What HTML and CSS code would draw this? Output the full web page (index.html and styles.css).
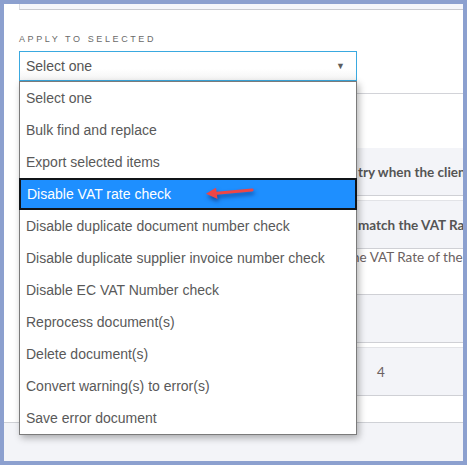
FILE: index.html
```html
<!DOCTYPE html>
<html>
<head>
<meta charset="utf-8">
<link rel="stylesheet" href="styles.css">
</head>
<body>
<div class="frame">
  <div class="main">
    <div class="topbox"></div>
    <div class="field">
      <div class="label">APPLY TO SELECTED</div>
      <div class="select">
        <span>Select one</span>
        <span class="caret">&#9660;</span>
      </div>
      <ul class="menu">
        <li>Select one</li>
        <li>Bulk find and replace</li>
        <li>Export selected items</li>
        <li class="active">Disable VAT rate check
          <svg class="pointer" width="56" height="22" viewBox="0 0 56 22">
            <line x1="12" y1="10.5" x2="50" y2="7" stroke="#ee4646" stroke-width="3.2" stroke-linecap="round"/>
            <polygon points="4,10.8 14,4.8 15.5,16" fill="#ee4646"/>
          </svg>
        </li>
        <li>Disable duplicate document number check</li>
        <li>Disable duplicate supplier invoice number check</li>
        <li>Disable EC VAT Number check</li>
        <li>Reprocess document(s)</li>
        <li>Delete document(s)</li>
        <li>Convert warning(s) to error(s)</li>
        <li>Save error document</li>
      </ul>
    </div>
    <div class="table">
      <div class="row blank"></div>
      <div class="row shade head"><div class="c1"></div><div class="c2">try when the client is in another country</div></div>
      <div class="gap"></div>
      <div class="row shade head"><div class="c1"></div><div class="c2">match the VAT Rate of the VAT code</div></div>
      <div class="row plain top"><div class="c1"></div><div class="c2 cut">he VAT Rate of the VAT code</div></div>
      <div class="row shade"><div class="c1"></div><div class="c2"></div></div>
      <div class="gap"></div>
      <div class="row shade"><div class="c1"></div><div class="c2 num">4</div></div>
      <div class="row tail"></div>
    </div>
  </div>
  <div class="footer"></div>
</div>
</body>
</html>
```

FILE: styles.css
```css
html, body {
  margin: 0;
  padding: 0;
}
body {
  font-family: "Liberation Sans", Arial, sans-serif;
}
.frame {
  width: 467px;
  height: 465px;
  box-sizing: border-box;
  border: 4px solid #8ca0cf;
  display: flex;
  flex-direction: column;
  background: #fff;
  overflow: hidden;
}
.main {
  height: 419px;
  box-sizing: border-box;
  border-bottom: 1px solid #cfd1d6;
  padding-left: 15px;
  background: #fff;
}
.footer {
  flex: 1;
  background: #f3f4f8;
}
.topbox {
  height: 6px;
  box-sizing: border-box;
  background: #f5f6fa;
  border-left: 1px solid #dcdde2;
  border-bottom: 1px solid #cacbd0;
}
.field {
  position: relative;
  width: 338px;
  padding-top: 24px;
}
.label {
  font-size: 9px;
  line-height: 10px;
  letter-spacing: 2.6px;
  color: #6a6a6a;
  margin-bottom: 7px;
}
.select {
  height: 30px;
  box-sizing: border-box;
  border: 1px solid #3aa9e0;
  display: flex;
  align-items: center;
  justify-content: space-between;
  padding: 0 11px 0 6px;
  font-size: 14px;
  color: #555;
  background: linear-gradient(#fff 60%, #f4f4f4);
}
.caret {
  font-size: 9px;
  color: #5d5d5d;
}
.menu {
  position: absolute;
  left: 0;
  top: 71px;
  width: 338px;
  box-sizing: border-box;
  margin: 0;
  padding: 0;
  list-style: none;
  background: #fff;
  border: 1px solid #7b7b7b;
  box-shadow: 2px 3px 7px rgba(0, 0, 0, 0.3);
  z-index: 2;
}
.menu li {
  height: 32px;
  box-sizing: border-box;
  padding-left: 6px;
  display: flex;
  align-items: center;
  font-size: 14px;
  color: #595959;
  position: relative;
}
.menu li.active {
  background: #1e8fff;
  color: #fff;
  border: 2px solid #101418;
  margin: 0 -1px;
  padding-left: 6px;
}
.pointer {
  position: absolute;
  left: 181px;
  top: 3px;
  filter: drop-shadow(1px 3px 2px rgba(10, 20, 80, 0.55));
}
.table {
  margin-top: 12px;
  overflow: hidden;
  border-top: 1px solid #d2d3d8;
  font-family: Lato, "Open Sans", sans-serif;
  font-size: 13.5px;
  color: #5a5a5a;
}
.row {
  display: grid;
  grid-template-columns: 338px 1fr;
  align-items: center;
  box-sizing: border-box;
  border-bottom: 1px solid #cfd0d5;
  white-space: nowrap;
}
.row.blank {
  height: 54px;
  border-bottom: none;
}
.shade {
  height: 48px;
  background: #f3f4f8;
}
.head {
  font-weight: bold;
  color: #555;
}
.plain {
  height: 46px;
  background: #fff;
}
.top {
  align-items: start;
}
.top .c2 {
  line-height: 16px;
  color: #6b6161;
}
.gap {
  height: 5px;
  box-sizing: border-box;
  border-bottom: 1px solid #e2e3e7;
}
.c2 {
  overflow: hidden;
  padding-left: 1px;
}
.cut {
  margin-left: -6px;
}
.num {
  padding-left: 20px;
  color: #6b6161;
}
.row.tail {
  height: 26px;
  border-bottom: none;
}
```
